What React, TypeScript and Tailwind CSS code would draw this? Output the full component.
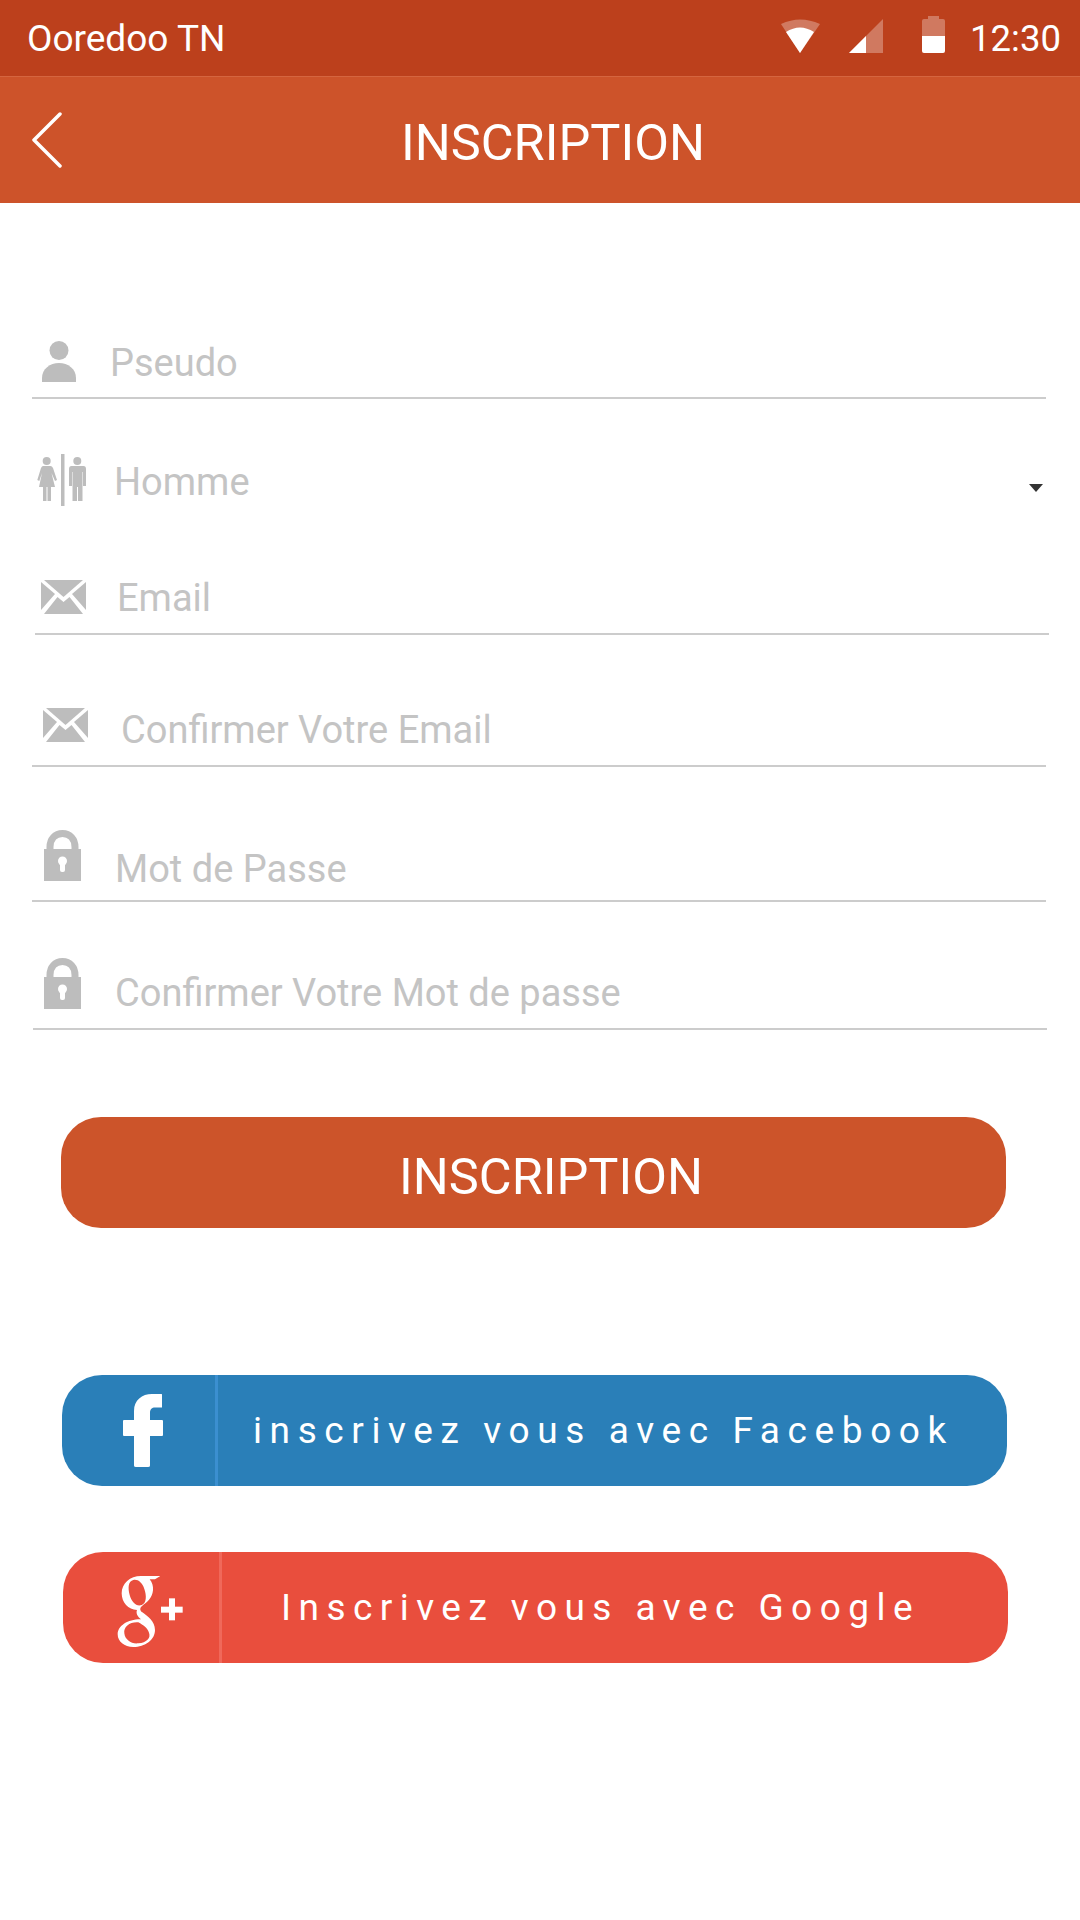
function StatusIcons() {
  return (
    <svg width="170" height="44" viewBox="0 0 170 44" className="shrink-0 mb-[12px] ml-[2px]">
      {/* wifi */}
      <path d="M4 14 Q23 5 43 14 L23 43 Z" fill="#fff" fillOpacity="0.3" />
      <path d="M9 22 Q23 13 37 22 L23 43 Z" fill="#fff" />
      {/* signal */}
      <path d="M72 43 L106 9 V43 Z" fill="#fff" fillOpacity="0.3" />
      <path d="M72 43 L89 26 V43 Z" fill="#fff" />
      {/* battery */}
      <path d="M151 9 V6 H162 V9 H166 Q168 9 168 11 V26 H145 V11 Q145 9 147 9 Z" fill="#fff" fillOpacity="0.3" />
      <path d="M145 26 H168 V41 Q168 43 166 43 H147 Q145 43 145 41 Z" fill="#fff" />
    </svg>
  );
}

function UserIcon() {
  return (
    <svg width="34" height="41" viewBox="0 0 34 41" className="shrink-0 ml-[10px] mb-[15px]" fill="#bdbdbd">
      <circle cx="17" cy="9.5" r="9.5" />
      <path d="M0 41 V37 C0 28 8 22 17 22 C26 22 34 28 34 37 V41 Z" />
    </svg>
  );
}

function GenderIcon() {
  return (
    <svg width="49" height="52" viewBox="0 0 49 52" className="shrink-0 ml-[5px] mb-[34px]" fill="#bdbdbd">
      <circle cx="9.7" cy="7" r="4" />
      <path d="M6 12 H13.5 Q15 12 16 14 L20 26 L18 27 L14.5 19 L18 33 H14 V47 H10.5 V33 H9.5 V47 H6 V33 H2 L5 19 L2.3 27 L0.3 26 L4 14 Q5 12 6 12 Z" />
      <rect x="24" y="0" width="3.5" height="52" />
      <circle cx="40.3" cy="7" r="4" />
      <path d="M34.5 12 H46.5 Q49 12 49 15 V32 H46 V18 H45.5 V47 H41 V33 H40 V47 H35.5 V18 H35 V32 H32 V15 Q32 12 34.5 12 Z" />
    </svg>
  );
}

function MailIcon({ className }: { className: string }) {
  return (
    <svg width="45" height="34" viewBox="0 0 45 34" className={className} fill="#bdbdbd">
      <path d="M3 0 H42 L22.5 17 Z" />
      <path d="M0 2 L14 14 L0 30 Z" />
      <path d="M45 2 L31 14 L45 30 Z" />
      <path d="M3 34 L16.5 17 L22.5 22 L28.5 17 L42 34 Z" />
    </svg>
  );
}

function LockIcon({ className }: { className: string }) {
  return (
    <svg width="37" height="51" viewBox="0 0 37 51" className={className}>
      <path d="M6 20 V17 C6 9 11 3.5 18.5 3.5 C26 3.5 31 9 31 17 V20" fill="none" stroke="#bdbdbd" strokeWidth="7" />
      <rect x="0" y="19" width="37" height="32" fill="#bdbdbd" />
      <circle cx="18.5" cy="31" r="4.5" fill="#fff" />
      <rect x="16" y="32" width="5" height="10" rx="2" fill="#fff" />
    </svg>
  );
}

function GooglePlusLogo() {
  return (
    <svg width="90" height="90" viewBox="0 0 270 270" fill="#fff" className="shrink-0 ml-[18px] mt-[5px]">
      <path
        fillRule="evenodd"
        d="M108 33 H166 L150 43 H134 C142 52 145 64 144 76 C142 100 125 112 112 122 C104 128 104 136 112 142 C128 154 150 168 150 195 C150 225 120 246 85 246 C58 246 38 230 38 208 C38 182 70 162 108 163 C98 155 92 145 96 135 C70 135 50 112 50 85 C50 55 75 33 108 33 Z M85 45 C70 48 68 68 74 90 C80 112 95 126 110 120 C125 115 125 92 118 72 C112 52 98 42 85 45 Z M100 172 C75 170 55 185 58 205 C60 225 80 238 100 235 C125 232 138 220 132 203 C128 190 115 180 100 172 Z"
      />
      <rect x="168" y="125" width="65" height="18" />
      <rect x="192" y="100" width="18" height="66" />
    </svg>
  );
}

export default function App() {
  return (
    <div className="w-[1080px] h-[1920px] bg-white overflow-hidden font-['Roboto',sans-serif]">
      {/* status bar */}
      <div className="h-[76px] bg-[#bc401c] flex items-center text-white pl-[27px] pr-[19px]">
        <span className="text-[37px] mt-[2px]">Ooredoo TN</span>
        <div className="ml-auto flex items-center">
          <StatusIcons />
          <span className="ml-[23px] text-[36.5px] mt-[2px]">12:30</span>
        </div>
      </div>

      {/* app bar */}
      <div className="h-[127px] bg-[#cd532a] border-t border-[#d5653f] flex items-center text-white pl-[32px]">
        <svg width="30" height="56" viewBox="0 0 30 56" fill="none" stroke="#fff" strokeWidth="3.5" strokeLinecap="round" strokeLinejoin="round" className="shrink-0 mb-[1px]">
          <path d="M28 2 L2 28 L28 54" />
        </svg>
        <h1 className="ml-[339px] mt-[7px] text-[50.5px] font-normal leading-none">INSCRIPTION</h1>
      </div>

      {/* form */}
      <div className="mt-[127px] text-[38px] leading-none text-[#c4c4c4]">
        <div className="ml-[32px] w-[1014px] h-[69px] border-b-2 border-[#cccccc] flex items-end">
          <UserIcon />
          <span className="ml-[34px] mb-[15px]">Pseudo</span>
        </div>
        <div className="ml-[32px] w-[1014px] h-[141px] flex items-end">
          <GenderIcon />
          <span className="ml-[28px] mb-[39px]">Homme</span>
          <div className="ml-auto mr-[3px] mb-[48px] w-0 h-0 border-x-[7px] border-x-transparent border-t-[8px] border-t-[#333333]" />
        </div>
        <div className="ml-[35px] w-[1014px] h-[95px] border-b-2 border-[#cccccc] flex items-end">
          <MailIcon className="shrink-0 ml-[6px] mb-[19px]" />
          <span className="ml-[31px] mb-[16px]">Email</span>
        </div>
        <div className="ml-[32px] w-[1014px] h-[132px] border-b-2 border-[#cccccc] flex items-end">
          <MailIcon className="shrink-0 ml-[11px] mb-[23px]" />
          <span className="ml-[33px] mb-[16px]">Confirmer Votre Email</span>
        </div>
        <div className="ml-[32px] w-[1014px] h-[135px] border-b-2 border-[#cccccc] flex items-end">
          <LockIcon className="shrink-0 ml-[12px] mb-[19px]" />
          <span className="ml-[34px] mb-[12px]">Mot de Passe</span>
        </div>
        <div className="ml-[33px] w-[1014px] h-[128px] border-b-2 border-[#cccccc] flex items-end">
          <LockIcon className="shrink-0 ml-[11px] mb-[19px]" />
          <span className="ml-[34px] mb-[16px]">Confirmer Votre Mot de passe</span>
        </div>
      </div>

      {/* actions */}
      <button className="block mt-[87px] ml-[61px] w-[945px] h-[111px] rounded-[40px] bg-[#cc542a] text-white text-[50.5px] pl-[35px] pt-[8px]">
        INSCRIPTION
      </button>

      <div className="mt-[147px] ml-[62px] w-[945px] h-[111px] rounded-[40px] bg-[#2a7fb8] flex text-white text-[37px] tracking-[7.6px]">
        <div className="w-[156px] h-full border-r-[3px] border-[#3b8fd0] flex items-center justify-center shrink-0">
          <svg width="40" height="73" viewBox="0 0 40 73" fill="#fff" className="shrink-0 ml-[9px]">
            <path d="M39 0.5 V13.5 H32 C29 13.5 27 15 27 19 V26 H39 Q40 26 40 27 V41 Q40 42 39 42 H27 V71.5 Q27 73 25 73 H13 Q11 73 11 71.5 V42 H1 Q0 42 0 41 V27 Q0 26 1 26 H11 V17 C11 6 19 0 29 0 H38.5 Q39 0 39 0.5 Z" />
          </svg>
        </div>
        <div className="flex-1 flex items-center pl-[35px]">inscrivez vous avec Facebook</div>
      </div>

      <div className="mt-[66px] ml-[63px] w-[945px] h-[111px] rounded-[40px] bg-[#e94e3d] flex text-white text-[37px] tracking-[7.45px]">
        <div className="w-[159px] h-full border-r-[3px] border-[#f0685a] flex items-center justify-center shrink-0">
          <GooglePlusLogo />
        </div>
        <div className="flex-1 flex items-center pl-[59px]">Inscrivez vous avec Google</div>
      </div>
    </div>
  );
}
